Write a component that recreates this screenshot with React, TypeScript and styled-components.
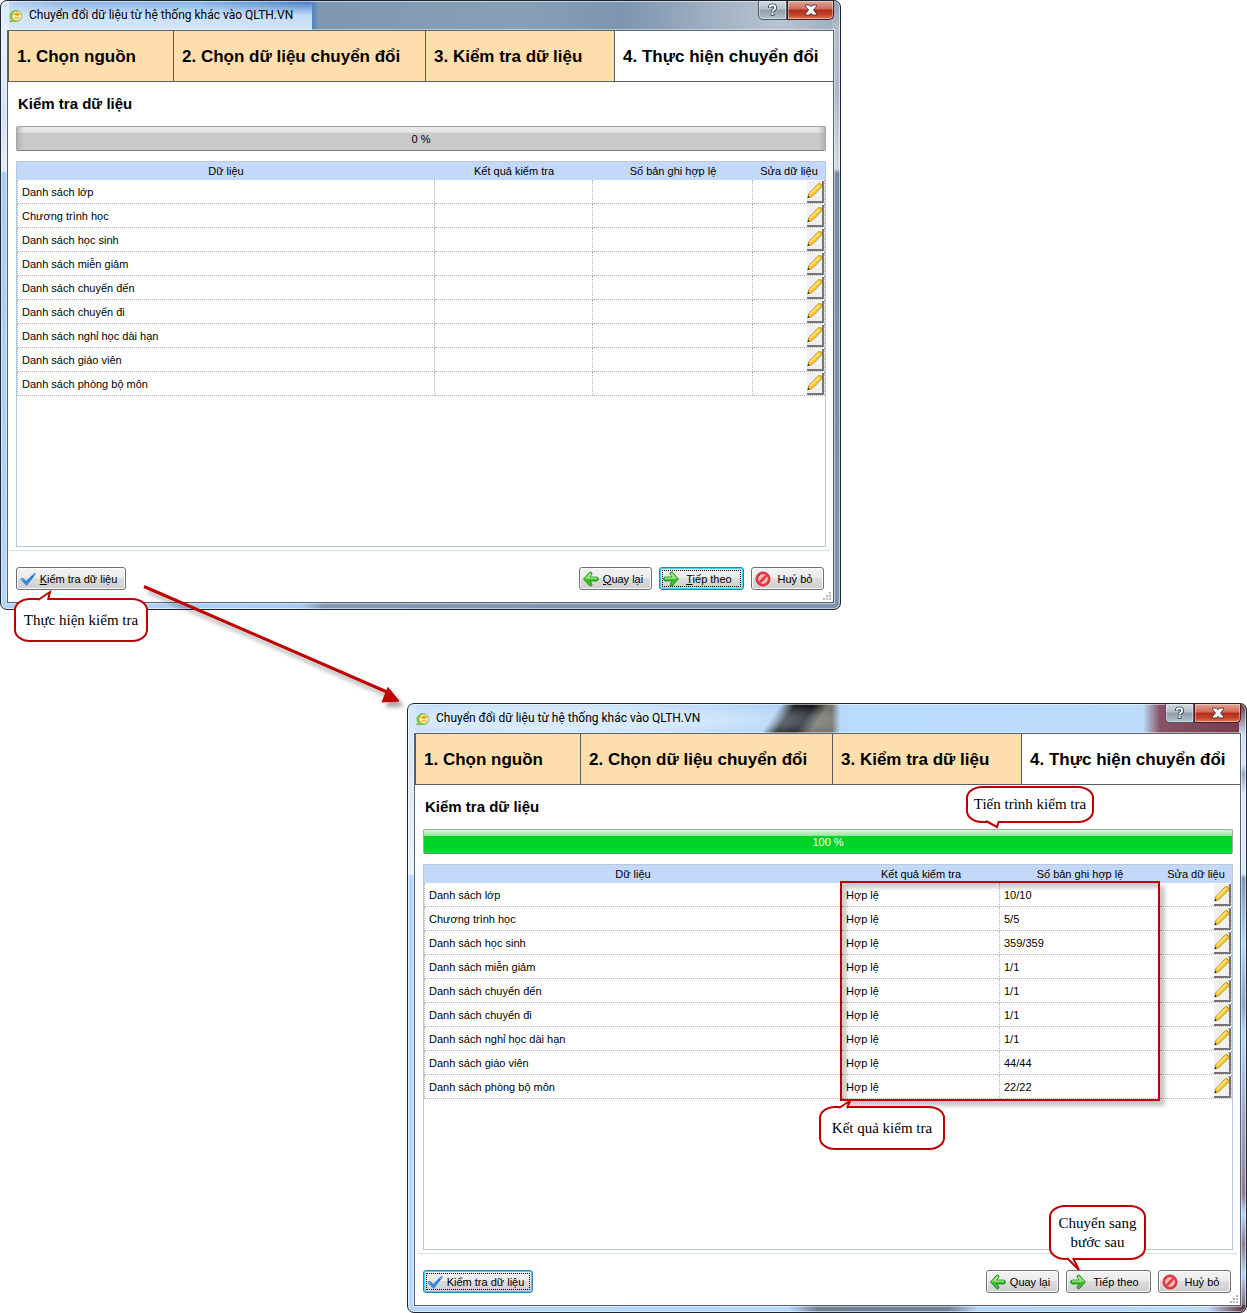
import React from "react";
import styled, { createGlobalStyle, css } from "styled-components";

const RED = "#c00000";
const UI_FONT = `"Liberation Sans", Arial, sans-serif`;

const GlobalStyle = createGlobalStyle`
  *, *::before, *::after { box-sizing: border-box; }
  body { margin: 0; background: #fff; font-family: ${UI_FONT}; color: #000; }
`;

const Desktop = styled.main`
  position: relative;
  display: grid;
  grid-template-columns: 407fr 434fr 406fr;
  row-gap: 93px;
`;

type Skin = "slate" | "sky";

const skins = {
  slate: css`
    grid-column: 1 / 3;
    padding: 0 6px 6px;
    background:
      linear-gradient(90deg, #b3d3f7 0, #a9cbf2 300px, #8399b3 322px, #7d93ae 100%) bottom / 100% 7px no-repeat,
      linear-gradient(180deg, #dcebfb 0, #e4f0fd 50px, #cfe2f8 110px, #e0edfc 170px, #a9ccf4 172px, #b4d4f8 100%) left / 8px 100% no-repeat,
      linear-gradient(180deg, #8ba0b8 0, #b2bfcd 28px, #aab9ca 90px, #d2dbe5 168px, #7489a4 172px, #7e95af 100%) right / 8px 100% no-repeat,
      linear-gradient(180deg, rgba(216, 233, 251, 0) 0, rgba(216, 233, 251, 0.85) 14px, #d4e6f9 100%) left top / 311px 30px no-repeat,
      linear-gradient(90deg, #b9d2ee 0, #8ab3e2 60px, #7fb0e3 200px, #3b78c4 308px, #8097b2 318px, #889fb8 520px, #7d95b0 620px, #b9c5d1 780px, #9cadbf 100%);
  `,
  sky: css`
    grid-column: 2 / 4;
    padding: 0 5px 6px 6px;
    background:
      linear-gradient(90deg, #b5d6fa 0, #b8daff 380px, #6f8094 410px, #70839a 540px, #b5d6f8 570px, #bbdbfd 800px, #5b2637 100%) bottom / 100% 7px no-repeat,
      linear-gradient(180deg, #d3e6fb 0, #e5f1fe 170px, #b4d6fb 172px, #badbff 100%) left / 8px 100% no-repeat,
      linear-gradient(180deg, #6b3948 0, #c8ddf5 30px, #d5e8fd 60px, #93a7c4 70px, #d9e9fb 90px, #dbeafc 170px, #7e98b8 174px, #b8dafd 240px, #8ba4c3 300px, #b8dafd 330px, #8e7a97 490px, #b8dafd 510px, #8e7a97 540px, #b8dafd 570px, #7d5068 100%) right / 7px 100% no-repeat,
      radial-gradient(ellipse 300px 24px at 150px 16px, rgba(222, 238, 255, 0.85) 40%, rgba(222, 238, 255, 0) 100%),
      linear-gradient(90deg, transparent 0, #b6d8fb 8px) 424px 0 / 16px 30px no-repeat,
      linear-gradient(125deg, transparent 0, transparent 14px, #191b1f 26px, #1a1b1d 42px, #77756f 54px, #77756f 100%) 356px 0 / 80px 30px no-repeat,
      linear-gradient(90deg, #b4d4f6 0, #aed1f7 350px, #aed1f7 428px, #b8dbfe 440px, #bddcfc 735px, #875366 752px, #75394b 100%);
  `,
};

const Frame = styled.section<{ $skin: Skin }>`
  position: relative;
  min-width: 0;
  border: 1px solid #1d2530;
  border-radius: 7px;
  ${(p) => skins[p.$skin]}
  box-shadow: inset 0 0 0 1px rgba(255, 255, 255, 0.55);
`;

const TitleBar = styled.header`
  display: flex;
  align-items: flex-start;
  height: 29px;
`;

const TitleIcon = styled.svg`
  flex: none;
  width: 14px;
  height: 14px;
  margin: 8px 6px 0 2px;
`;

const Title = styled.h1`
  flex: 1;
  margin: 0;
  font: 400 12px/28px Roboto, "Noto Sans", sans-serif;
  white-space: nowrap;
`;

const CaptionButton = styled.button<{ $close?: boolean }>`
  display: grid;
  place-items: center;
  width: ${(p) => (p.$close ? 47 : 29)}px;
  height: 19px;
  padding: 0;
  border: 1px solid ${(p) => (p.$close ? "#4d1b1d" : "#4b5766")};
  border-top: 0;
  border-radius: ${(p) => (p.$close ? "0 0 5px 0" : "0 0 0 5px")};
  background: ${(p) =>
    p.$close
      ? "linear-gradient(180deg, #e2a596 0, #cf6a58 45%, #b12c19 50%, #c9472d 80%, #dc7f5c 100%)"
      : "linear-gradient(180deg, #d3dae2 0, #b4bfcb 45%, #8f9dac 50%, #b4c1cd 100%)"};
  box-shadow: inset 0 0 0 1px rgba(255, 255, 255, 0.4);
`;

const Client = styled.div`
  display: flex;
  flex-direction: column;
  border: 1px solid #56606c;
  background: #fff;
  box-shadow: 0 0 0 1px rgba(255, 255, 255, 0.5);
`;

const Steps = styled.ol`
  display: grid;
  grid-template-columns: 165fr 252fr 189fr 218fr;
  height: 51px;
  margin: 0;
  padding: 0;
  border-bottom: 1px solid #5c5c5c;
  border-left: 1px solid #5c5c5c;
  list-style: none;
`;

const Step = styled.li<{ $passed: boolean }>`
  padding: 2px 0 0 8px;
  background: ${(p) => (p.$passed ? "#ffdead" : "#fff")};
  border-right: ${(p) => (p.$passed ? "1px solid #5c5c5c" : "0")};
  font-size: 17px;
  font-weight: 700;
  line-height: 48px;
  white-space: nowrap;
`;

const Body = styled.div`
  position: relative;
  display: flex;
  flex-direction: column;
  padding: 0 7px 0 8px;
`;

const Heading = styled.h2`
  margin: 0;
  padding-left: 2px;
  font-size: 15px;
  line-height: 44px;
`;

const Progress = styled.div<{ $done: boolean }>`
  height: 25px;
  border: 1px solid #a6a6a6;
  border-bottom-color: #808080;
  border-radius: 2px;
  background: ${(p) =>
    p.$done
      ? "linear-gradient(180deg, #d3f8d6 0, #a2e8ab 5px, #8fe29b 6px, #00d427 6px, #00d427 19px, #12e438 100%)"
      : "linear-gradient(180deg, #f4f4f4 0, #dcdcdc 6px, #c9c9c9 6px, #c9c9c9 19px, #d4d4d4 100%)"};
  box-shadow: ${(p) => (p.$done ? "none" : "inset 6px 0 6px -4px #a8a8a8, inset -6px 0 6px -4px #a8a8a8")};
  color: ${(p) => (p.$done ? "#fff" : "#000")};
  font-size: 11px;
  line-height: 24px;
  text-align: center;
`;

const List = styled.div`
  position: relative;
  min-height: 386px;
  margin-top: 10px;
  border: 1px solid #b9c9da;
`;

const Table = styled.table`
  width: 100%;
  border-collapse: separate;
  border-spacing: 0;
  table-layout: fixed;
  font-size: 11px;
`;

const HeadCell = styled.th<{ $width?: number }>`
  width: ${(p) => (p.$width ? `${p.$width}px` : "auto")};
  height: 18px;
  padding: 0;
  background: #c4d9f9;
  font-weight: 400;
  line-height: 18px;
`;

const Cell = styled.td`
  height: 24px;
  padding: 1px 0 0 4px;
  border-right: 1px dotted #b4b4b4;
  border-bottom: 1px dotted #b4b4b4;
  line-height: 22px;
  white-space: nowrap;

  &:first-child {
    border-left: 1px dotted #b4b4b4;
  }
`;

const EditCell = styled(Cell)`
  padding: 0;
`;

const EditButton = styled.button`
  display: block;
  width: 17px;
  height: 22px;
  margin-left: auto;
  padding: 0;
  border: 0;
  border-right: 2px solid #757575;
  border-bottom: 2px solid #757575;
  background: #efefef;

  svg {
    display: block;
    width: 16px;
    height: 17px;
  }
`;

const Rule = styled.hr`
  width: calc(100% + 10px);
  height: 1px;
  margin: 3px -4px 16px -6px;
  border: 0;
  background: #d5dfe8;
`;

const Footer = styled.footer`
  display: flex;
  gap: 7px;
  padding: 0 2px 12px 0;
`;

const Spacer = styled.span`
  flex: 1;
`;

const ActionButton = styled.button<{ $width: number; $focused?: boolean }>`
  position: relative;
  display: flex;
  align-items: center;
  width: ${(p) => p.$width}px;
  height: 23px;
  padding: 0 4px 0 3px;
  border: 1px solid ${(p) => (p.$focused ? "#3a7ca6" : "#707070")};
  border-radius: 3px;
  background: linear-gradient(180deg, #f3f3f3 0, #ebebeb 50%, #dddddd 50%, #cdcdcd 100%);
  box-shadow: inset 0 0 0 1px ${(p) => (p.$focused ? "#48d0f8" : "#fcfcfc")};
  color: #000;
  font: 400 11px/20px ${UI_FONT};
  white-space: nowrap;

  &::after {
    content: "";
    position: absolute;
    inset: 2px;
    border: ${(p) => (p.$focused ? "1px dotted #000" : "0")};
  }

  svg {
    flex: none;
    width: 16px;
    height: 16px;
  }
`;

const ActionLabel = styled.span`
  flex: 1;
  text-align: center;
`;

const Grip = styled.svg`
  position: absolute;
  right: 1px;
  bottom: 1px;
  width: 9px;
  height: 9px;
`;

const Highlight = styled.div`
  position: absolute;
  top: 16px;
  right: 72px;
  width: 320px;
  height: 220px;
  border: 2px solid ${RED};
  box-shadow: 5px 5px 4px rgba(0, 0, 0, 0.22), inset 5px 5px 4px rgba(0, 0, 0, 0.2);
`;

type Place = { top: number; left?: number; right?: number; width: number; height: number };

const Callout = styled.p<{ $place: Place }>`
  position: absolute;
  z-index: 2;
  top: ${(p) => p.$place.top}px;
  ${(p) => (p.$place.left !== undefined ? `left: ${p.$place.left}px;` : `right: ${p.$place.right}px;`)}
  display: grid;
  place-items: center;
  width: ${(p) => p.$place.width}px;
  height: ${(p) => p.$place.height}px;
  margin: 0;
  border: 2px solid ${RED};
  border-radius: 16px / 12px;
  background: #fff;
  font: 400 15px/19px "Liberation Serif", "Times New Roman", serif;
  text-align: center;
  white-space: nowrap;
`;

const Tail = styled.svg<{ $x: number; $below?: boolean }>`
  position: absolute;
  left: ${(p) => p.$x}px;
  ${(p) => (p.$below ? "top: 100%;" : "bottom: 100%;")}
  overflow: visible;
  fill: #fff;
  stroke: ${RED};
  stroke-width: 2;
`;

const Arrow = styled.svg`
  position: absolute;
  top: 575px;
  left: 135px;
  z-index: 1;
  width: 280px;
  height: 140px;
  filter: drop-shadow(4px 5px 2px rgba(0, 0, 0, 0.35));
`;

const CheckIcon = () => (
  <svg viewBox="0 0 16 16" aria-hidden="true">
    <path d="M.8 8.3 3 7.2 6 10.7 14.6 2.2 15.2 3.2 6.6 14.4Z" fill="#a6d2f7" stroke="#2176d2" strokeLinejoin="round" />
    <path d="M3 8.8 6.3 12.4 13 4.6" fill="none" stroke="#1672d2" strokeWidth="1.2" />
  </svg>
);

const ArrowIcon = ({ back }: { back?: boolean }) => (
  <svg viewBox="0 0 16 16" aria-hidden="true">
    <g transform={back ? undefined : "translate(16 0) scale(-1 1)"}>
      <path d="M.6 8 6.8 1.2Q8.6.6 9 2.6L6.8 6.1H14Q15.3 6.3 15.3 8T14 9.9H6.8L9 13.4Q8.6 15.4 6.8 14.8Z" fill="#3fbf2b" stroke="#1c8a18" strokeLinejoin="round" />
      <path d="M2.4 7.7 7.3 2.5 7.7 3.2 5 7.1H14" fill="none" stroke="#a6ee8c" strokeWidth="1.1" />
    </g>
  </svg>
);

const CancelIcon = () => (
  <svg viewBox="0 0 16 16" aria-hidden="true">
    <circle cx="8" cy="8" r="7" fill="#ea3c45" stroke="#cf2832" />
    <circle cx="8" cy="8" r="4.3" fill="#f3b4b7" stroke="#fbe0e0" strokeWidth=".8" />
    <path d="M4.9 11.1 11.1 4.9" stroke="#e0303a" strokeWidth="2.4" />
  </svg>
);

const PencilIcon = () => (
  <svg viewBox="0 0 17 18" aria-hidden="true">
    <path d="M1.2 16.4 1.8 12.6 11.6 2.3Q13 1 15 2.2 16.3 3.8 15.2 5.6L5.2 15.5Z" fill="#f9cb32" stroke="#c88a10" strokeLinejoin="round" />
    <path d="M3.4 12.8 12.8 3.5" stroke="#ffeb8c" strokeWidth="1.4" />
    <path d="M.4 17.2 1.2 14.6 3 16.4Z" fill="#222" />
  </svg>
);

const AppIcon = () => (
  <TitleIcon viewBox="0 0 14 14" aria-hidden="true">
    <path d="M1 8.2A6 5.6 0 1 1 8 12.6H.4L2.4 11Q1.2 9.8 1 8.2Z" fill="#8cc63a" stroke="#6aa524" strokeWidth=".6" />
    <circle cx="8" cy="6.9" r="4.5" fill="#fff6d2" />
    <path d="M3.8 5.4 8.2 3.2 12.4 5.2 8.2 7.2Z" fill="#f0a818" />
    <path d="M5.4 7.2V9.4Q8 10.8 10.8 9.4V7.2L8.2 8.4Z" fill="#f5bd3a" />
  </TitleIcon>
);

const HelpGlyph = () => (
  <svg width="11" height="14" viewBox="0 0 11 14" aria-hidden="true" fill="none">
    <path d="M2.8 5V4.7Q2.8 2.3 5.5 2.3T8.2 4.7Q8.2 6 6.8 6.8 5.6 7.5 5.6 8.8M5.6 10.4V12.8" stroke="#3d4655" strokeWidth="3.8" />
    <path d="M2.8 4.4Q2.8 2.3 5.5 2.3T8.2 4.7Q8.2 6 6.8 6.8 5.6 7.5 5.6 8.5M5.6 10.2V12" stroke="#fff" strokeWidth="1.9" />
  </svg>
);

const CloseGlyph = () => (
  <svg width="14" height="12" viewBox="0 0 14 12" aria-hidden="true">
    <path d="M1.5 1H5.5L7 2.8 8.5 1H12.5V2.5L9.5 6 12.5 9.5V11H8.5L7 9.2 5.5 11H1.5V9.5L4.5 6 1.5 2.5Z" fill="#fff" stroke="#4a3c4a" />
  </svg>
);

const STEPS = ["1. Chọn nguồn", "2. Chọn dữ liệu chuyển đổi", "3. Kiểm tra dữ liệu", "4. Thực hiện chuyển đổi"];

const ROWS = [
  ["Danh sách lớp", "10/10"],
  ["Chương trình học", "5/5"],
  ["Danh sách học sinh", "359/359"],
  ["Danh sách miễn giảm", "1/1"],
  ["Danh sách chuyển đến", "1/1"],
  ["Danh sách chuyển đi", "1/1"],
  ["Danh sách nghỉ học dài hạn", "1/1"],
  ["Danh sách giáo viên", "44/44"],
  ["Danh sách phòng bộ môn", "22/22"],
];

const Mnemonic = ({ text, shown }: { text: string; shown: boolean }) => (
  <ActionLabel>
    {shown ? <u>{text[0]}</u> : text[0]}
    {text.slice(1)}
  </ActionLabel>
);

type WizardProps = { skin: Skin; checked: boolean; highlight?: React.ReactNode; children?: React.ReactNode };

function Wizard({ skin, checked, highlight, children }: WizardProps) {
  return (
    <Frame $skin={skin}>
      <TitleBar>
        <AppIcon />
        <Title>Chuyển đổi dữ liệu từ hệ thống khác vào QLTH.VN</Title>
        <CaptionButton type="button" aria-label="Trợ giúp">
          <HelpGlyph />
        </CaptionButton>
        <CaptionButton type="button" $close aria-label="Đóng">
          <CloseGlyph />
        </CaptionButton>
      </TitleBar>
      <Client>
        <Steps>
          {STEPS.map((name, i) => (
            <Step key={name} $passed={i < 3}>
              {name}
            </Step>
          ))}
        </Steps>
        <Body>
          <Heading>Kiểm tra dữ liệu</Heading>
          <Progress role="progressbar" aria-valuenow={checked ? 100 : 0} $done={checked}>
            {checked ? "100 %" : "0 %"}
          </Progress>
          <List>
            <Table>
              <thead>
                <tr>
                  <HeadCell>Dữ liệu</HeadCell>
                  <HeadCell $width={158}>Kết quả kiểm tra</HeadCell>
                  <HeadCell $width={160}>Số bản ghi hợp lệ</HeadCell>
                  <HeadCell $width={72}>Sửa dữ liệu</HeadCell>
                </tr>
              </thead>
              <tbody>
                {ROWS.map(([name, count]) => (
                  <tr key={name}>
                    <Cell>{name}</Cell>
                    <Cell>{checked && "Hợp lệ"}</Cell>
                    <Cell>{checked && count}</Cell>
                    <EditCell>
                      <EditButton type="button" aria-label={`Sửa ${name}`}>
                        <PencilIcon />
                      </EditButton>
                    </EditCell>
                  </tr>
                ))}
              </tbody>
            </Table>
            {highlight}
          </List>
          <Rule />
          <Footer>
            <ActionButton type="button" $width={110} $focused={checked}>
              <CheckIcon />
              <Mnemonic text="Kiểm tra dữ liệu" shown={!checked} />
            </ActionButton>
            <Spacer />
            <ActionButton type="button" $width={73}>
              <ArrowIcon back />
              <Mnemonic text="Quay lại" shown={!checked} />
            </ActionButton>
            <ActionButton type="button" $width={85} $focused={!checked}>
              <ArrowIcon />
              <Mnemonic text="Tiếp theo" shown={!checked} />
            </ActionButton>
            <ActionButton type="button" $width={73}>
              <CancelIcon />
              <ActionLabel>Huỷ bỏ</ActionLabel>
            </ActionButton>
          </Footer>
          <Grip viewBox="0 0 9 9" aria-hidden="true" fill="#b8b8b8">
            <path d="M6 0h2v2h-2zM3 3h2v2h-2zM6 3h2v2h-2zM0 6h2v2h-2zM3 6h2v2h-2zM6 6h2v2h-2z" />
          </Grip>
        </Body>
      </Client>
      {children}
    </Frame>
  );
}

export default function App() {
  return (
    <>
      <GlobalStyle />
      <Desktop>
        <Wizard skin="slate" checked={false}>
          <Callout $place={{ top: 597, left: 13, width: 134, height: 44 }}>
            Thực hiện kiểm tra
            <Tail $x={22} width="16" height="9" viewBox="0 0 16 9">
              <path d="M0 9 12 1 10 9" />
            </Tail>
          </Callout>
        </Wizard>
        <Wizard skin="sky" checked highlight={<Highlight />}>
          <Callout $place={{ top: 82, right: 152, width: 128, height: 37 }}>
            Tiến trình kiểm tra
            <Tail $below $x={18} width="14" height="7" viewBox="0 0 14 7">
              <path d="M0 0 11 6 13 0" />
            </Tail>
          </Callout>
          <Callout $place={{ top: 402, right: 301, width: 126, height: 44 }}>
            Kết quả kiểm tra
            <Tail $x={18} width="14" height="8" viewBox="0 0 14 8">
              <path d="M0 8 11 1 8 8" />
            </Tail>
          </Callout>
          <Callout $place={{ top: 501, right: 100, width: 97, height: 55 }}>
            <span>
              Chuyển sang
              <br />
              bước sau
            </span>
            <Tail $below $x={16} width="14" height="13" viewBox="0 0 14 13">
              <path d="M0 0 12 12 6 0" />
            </Tail>
          </Callout>
        </Wizard>
        <Arrow viewBox="0 0 280 140" aria-hidden="true">
          <path d="M9 11.5 252 117" stroke={RED} strokeWidth="3" />
          <path d="M253 112.5 264 126 247 127Z" fill={RED} stroke={RED} />
        </Arrow>
      </Desktop>
    </>
  );
}
